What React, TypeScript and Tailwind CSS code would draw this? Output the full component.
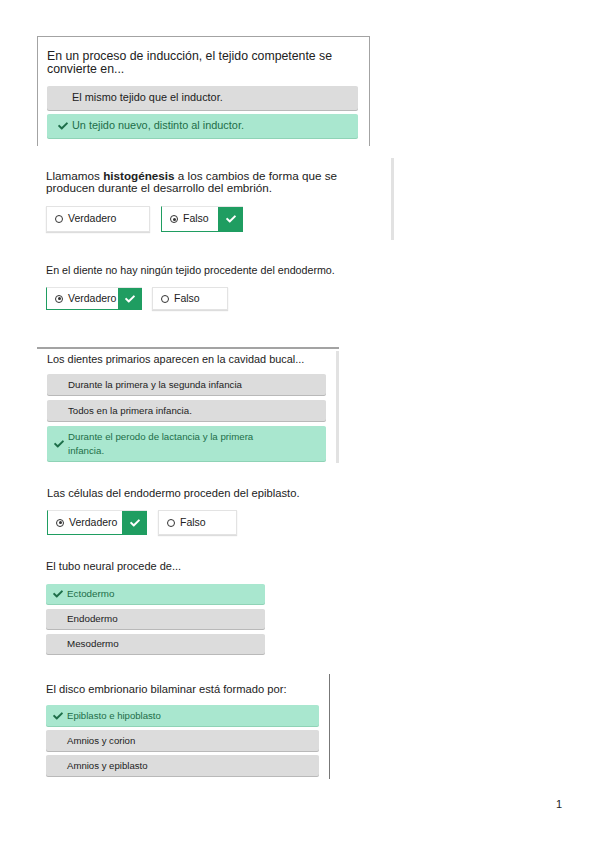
import React from "react";
import { FaCheck } from "react-icons/fa";

const Check = ({ className = "" }: { className?: string }) => (
  <FaCheck className={className} />
);

function Opt({
  text,
  correct,
  h,
  size,
  indent = "w-[21px]",
}: {
  text: React.ReactNode;
  correct?: boolean;
  h: string;
  size: string;
  indent?: string;
}) {
  return (
    <div
      className={`flex items-center rounded-[2px] ${h} ${size} ${
        correct
          ? "bg-[#a9e7cf] text-[#1d6e49] shadow-[0_1px_0_#8fd3b6]"
          : "bg-[#dcdcdc] text-[#222] shadow-[0_1px_0_#b9b9b9]"
      }`}
    >
      <div className={`${indent} shrink-0 flex justify-end pr-[4px]`}>
        {correct && <Check className="w-[10px] h-[10px] text-[#1d6e49]" />}
      </div>
      <div className="leading-[1.4]">{text}</div>
    </div>
  );
}

function Radio({ on }: { on?: boolean }) {
  return (
    <span className="inline-flex w-[8px] h-[8px] rounded-full border-[1.3px] border-[#333] items-center justify-center mr-[5px]">
      {on && <span className="w-[3px] h-[3px] rounded-full bg-[#333]" />}
    </span>
  );
}

function TF({
  label,
  selected,
  w,
  h,
  checkW,
}: {
  label: string;
  selected?: boolean;
  w: string;
  h: string;
  checkW: string;
}) {
  return (
    <div
      className={`flex ${w} ${h} bg-white text-[10.5px] ${
        selected
          ? "border-l border-b border-t border-l-[#1f9d61] border-b-[#1f9d61] border-t-[#e6e6e6]"
          : "border border-[#e3e3e3] shadow-[0_1px_1px_#ddd]"
      }`}
    >
      <div className="flex-1 flex items-center pl-[8px]">
        <Radio on={selected} />
        <span>{label}</span>
      </div>
      {selected && (
        <div className={`${checkW} bg-[#1f9d61] flex items-center justify-center`}>
          <Check className="w-[10px] h-[10px] text-white" />
        </div>
      )}
    </div>
  );
}

export default function App() {
  return (
    <div className="w-[599px] h-[848px] bg-white text-[#222] font-['Liberation_Sans',Arial,sans-serif] overflow-hidden flex flex-col">
      {/* Block 1 */}
      <div className="ml-[37px] mt-[36px] w-[333px] h-[110px] border-x-[1.5px] border-t-[1.5px] border-[#a3a3a3] pl-[9px] pr-[11px] pt-[13px]">
        <p className="text-[12.3px] leading-[13px]">
          En un proceso de inducción, el tejido competente se
          <br />
          convierte en...
        </p>
        <div className="mt-[10px] flex flex-col gap-[4px]">
          <Opt h="h-[24px]" size="text-[10.9px]" indent="w-[25px]" text="El mismo tejido que el inductor." />
          <Opt h="h-[24px]" size="text-[10.9px]" indent="w-[25px]" correct text="Un tejido nuevo, distinto al inductor." />
        </div>
      </div>

      {/* Block 2 */}
      <div className="ml-[46px] mt-[12px] w-[348px] h-[82px] border-r-[3px] border-[#e2e2e2] pt-[12px]">
        <p className="text-[11.7px] leading-[12px]">
          Llamamos <b>histogénesis</b> a los cambios de forma que se
          <br />
          producen durante el desarrollo del embrión.
        </p>
        <div className="mt-[12px] flex gap-[11px]">
          <TF label="Verdadero" w="w-[104px]" h="h-[26px]" checkW="w-[25px]" />
          <TF label="Falso" selected w="w-[82px]" h="h-[26px]" checkW="w-[25px]" />
        </div>
      </div>

      {/* Block 3 */}
      <div className="ml-[46px] mt-[24px]">
        <p className="text-[10.7px] leading-[12px]">
          En el diente no hay ningún tejido procedente del endodermo.
        </p>
        <div className="mt-[11px] flex gap-[10px]">
          <TF label="Verdadero" selected w="w-[96px]" h="h-[23px]" checkW="w-[24px]" />
          <TF label="Falso" w="w-[76px]" h="h-[23px]" checkW="w-[24px]" />
        </div>
      </div>

      {/* Block 4 */}
      <div className="ml-[37px] mt-[37px] w-[302px] border-t-2 border-[#a3a3a3]">
        <div className="mt-[2px] border-r-[3px] border-[#e2e2e2] pl-[10px] pr-[10px] pt-[2px] h-[112px]">
          <p className="text-[10.9px] leading-[12px]">
            Los dientes primarios aparecen en la cavidad bucal...
          </p>
          <div className="mt-[9px] flex flex-col gap-[5px]">
            <Opt h="h-[21px]" size="text-[9.7px]" text="Durante la primera y la segunda infancia" />
            <Opt h="h-[21px]" size="text-[9.7px]" text="Todos en la primera infancia." />
            <Opt
              h="h-[35px]"
              size="text-[9.7px]"
              correct
              text={
                <>
                  Durante el perodo de lactancia y la primera
                  <br />
                  infancia.
                </>
              }
            />
          </div>
        </div>
      </div>

      {/* Block 5 */}
      <div className="ml-[47px] mt-[24px]">
        <p className="text-[11.2px] leading-[12px]">
          Las células del endodermo proceden del epiblasto.
        </p>
        <div className="mt-[11px] flex gap-[11px]">
          <TF label="Verdadero" selected w="w-[100px]" h="h-[25px]" checkW="w-[25px]" />
          <TF label="Falso" w="w-[79px]" h="h-[25px]" checkW="w-[25px]" />
        </div>
      </div>

      {/* Block 6 */}
      <div className="ml-[46px] mt-[25px] w-[219px]">
        <p className="text-[11px] leading-[12px]">El tubo neural procede de...</p>
        <div className="mt-[12px] flex flex-col gap-[5px]">
          <Opt h="h-[20px]" size="text-[9.8px]" correct text="Ectodermo" />
          <Opt h="h-[20px]" size="text-[9.8px]" text="Endodermo" />
          <Opt h="h-[20px]" size="text-[9.8px]" text="Mesodermo" />
        </div>
      </div>

      {/* Block 7 */}
      <div className="ml-[46px] mt-[20px] w-[284px] border-r border-[#777] pr-[10px] pt-[9px] h-[105px]">
        <p className="text-[11.2px] leading-[12px]">
          El disco embrionario bilaminar está formado por:
        </p>
        <div className="mt-[10px] flex flex-col gap-[4px]">
          <Opt h="h-[21px]" size="text-[9.6px]" correct text="Epiblasto e hipoblasto" />
          <Opt h="h-[21px]" size="text-[9.6px]" text="Amnios y corion" />
          <Opt h="h-[21px]" size="text-[9.6px]" text="Amnios y epiblasto" />
        </div>
      </div>

      <div className="mt-[17px] pr-[37px] flex justify-end text-[11px] text-[#222]">1</div>
    </div>
  );
}
